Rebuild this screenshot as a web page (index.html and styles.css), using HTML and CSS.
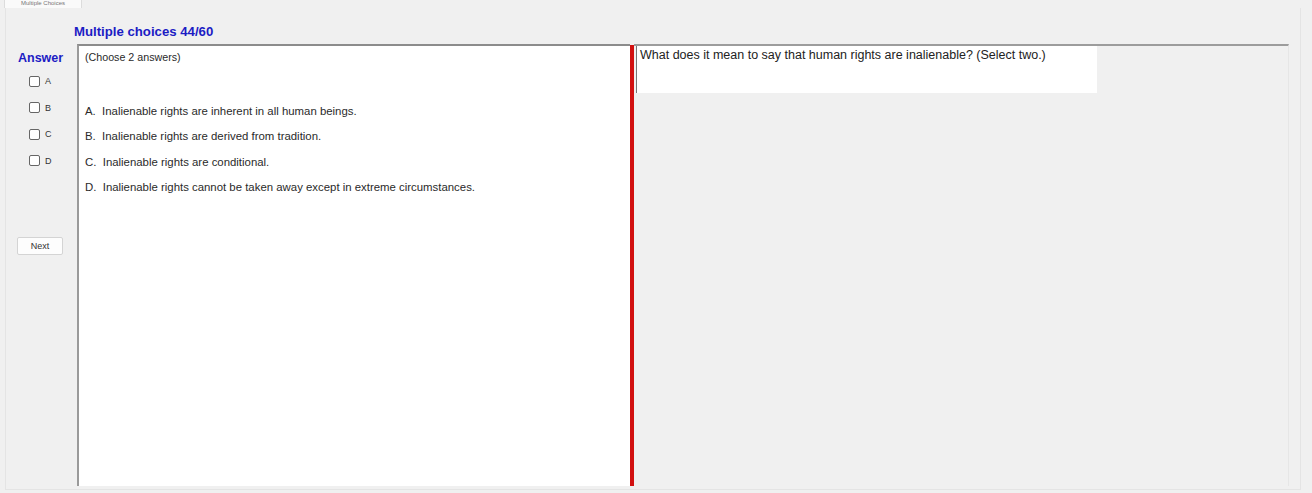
FILE: index.html
```html
<!DOCTYPE html>
<html>
<head>
<meta charset="utf-8">
<link rel="stylesheet" href="styles.css">
</head>
<body>
<div class="tabs">
  <div class="tab">Multiple Choices</div>
</div>
<div class="page">
  <div class="title">Multiple choices 44/60</div>
  <div class="main">
    <div class="side">
      <div class="answer">Answer</div>
      <label class="opt"><span class="box"></span>A</label>
      <label class="opt"><span class="box"></span>B</label>
      <label class="opt"><span class="box"></span>C</label>
      <label class="opt"><span class="box"></span>D</label>
      <div class="btnwrap"><button class="next">Next</button></div>
    </div>
    <div class="choices">
      <div class="hint">(Choose 2 answers)</div>
      <div class="list">
        <div class="item">A.&nbsp; Inalienable rights are inherent in all human beings.</div>
        <div class="item">B.&nbsp; Inalienable rights are derived from tradition.</div>
        <div class="item">C.&nbsp; Inalienable rights are conditional.</div>
        <div class="item">D.&nbsp; Inalienable rights cannot be taken away except in extreme circumstances.</div>
      </div>
    </div>
    <div class="splitter"></div>
    <div class="right">
      <div class="question">What does it mean to say that human rights are inalienable? (Select two.)</div>
    </div>
  </div>
</div>
</body>
</html>
```
FILE: styles.css
```css
html, body {
  margin: 0;
  padding: 0;
  background: #f0f0f0;
  font-family: "Liberation Sans", Arial, sans-serif;
  color: #222;
  width: 1312px;
  height: 493px;
  overflow: hidden;
}
.tabs {
  height: 8px;
  padding-left: 4px;
  display: flex;
}
.tab {
  width: 78px;
  height: 8px;
  background: #fafafa;
  border: 1px solid #dcdcdc;
  border-top: none;
  border-bottom: none;
  font-size: 6px;
  line-height: 6px;
  color: #777;
  text-align: center;
  overflow: hidden;
  box-sizing: border-box;
}
.page {
  margin: 0 11px 0 5px;
  height: 482px;
  border: 1px solid #e4e4e4;
  border-top: none;
  box-sizing: border-box;
  display: flex;
  flex-direction: column;
}
.title {
  height: 36px;
  padding: 16px 0 0 68px;
  box-sizing: border-box;
  color: #1c1cc4;
  font-weight: bold;
  font-size: 13.2px;
}
.main {
  flex: 1;
  display: flex;
  margin-bottom: 3px;
}
.side {
  width: 71px;
  display: flex;
  flex-direction: column;
}
.answer {
  color: #1c1cc4;
  font-weight: bold;
  font-size: 12.5px;
  padding: 7px 0 0 12px;
  height: 24px;
  box-sizing: border-box;
}
.opt {
  display: flex;
  align-items: center;
  height: 26.5px;
  padding-left: 23px;
  font-size: 9px;
  color: #333;
}
.box {
  width: 9px;
  height: 9px;
  border: 1px solid #666;
  border-radius: 2px;
  background: #fff;
  margin-right: 5px;
}
.btnwrap {
  padding: 61px 0 0 11px;
}
.next {
  width: 46px;
  height: 18px;
  background: #fdfdfd;
  border: 1px solid #d4d4d4;
  border-radius: 2px;
  font-family: "Liberation Sans", Arial, sans-serif;
  font-size: 9px;
  color: #333;
  padding: 0;
}
.choices {
  width: 553px;
  background: #fff;
  border-top: 2px solid #8c8c8c;
  border-left: 2px solid #9a9a9a;
  box-sizing: border-box;
  padding: 5px 0 0 6px;
  font-size: 11.4px;
  color: #2a2a2a;
}
.hint {
  font-size: 10.7px;
  height: 54px;
}
.list {
  display: flex;
  flex-direction: column;
}
.item {
  height: 25.3px;
}
.splitter {
  width: 4px;
  background: #d21010;
  margin-top: 1px;
}
.right {
  flex: 1;
  border-top: 2px solid #9c9c9c;
  margin-right: 11px;
  padding-left: 2px;
  border-right: 1px solid #e6e6e6;
}
.question {
  width: 461px;
  height: 47px;
  box-sizing: border-box;
  background: #fff;
  border-left: 1px solid #777;
  padding: 2px 0 0 3px;
  font-size: 12.5px;
  color: #222;
}
```
